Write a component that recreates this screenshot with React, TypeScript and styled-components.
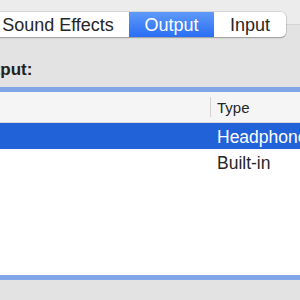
import styled, { createGlobalStyle } from 'styled-components';

const GlobalStyle = createGlobalStyle`
  html, body {
    margin: 0;
    padding: 0;
    background: #ececec;
  }

  body {
    font-family: 'Liberation Sans', Arial, sans-serif;
    color: #222;
  }
`;

const Window = styled.div`
  width: 300px;
  height: 300px;
  overflow: hidden;
  display: flex;
  flex-direction: column;
  background: #ececec;
`;

const Segmented = styled.div`
  position: relative;
  z-index: 1;
  display: flex;
  align-self: flex-start;
  height: 25px;
  margin: 12px 0 -13px -13px;
  background: #fff;
  border-radius: 5px;
  box-shadow: 0 0 0 0.5px rgba(0, 0, 0, 0.18), 0 1px 1.5px rgba(0, 0, 0, 0.25);
  overflow: hidden;
`;

const Segment = styled.div<{ $active?: boolean; $width: number }>`
  width: ${(p) => p.$width}px;
  display: flex;
  align-items: center;
  justify-content: center;
  padding-top: 1px;
  font-size: 18px;
  color: ${(p) => (p.$active ? '#fff' : '#262626')};
  background: ${(p) =>
    p.$active ? 'linear-gradient(#5e9af8, #2a6ef4)' : 'transparent'};
`;

const TabBox = styled.div`
  flex: 1;
  display: flex;
  flex-direction: column;
  background: #e3e3e3;
  border-top: 1px solid #d3d3d3;
  padding-top: 35px;
`;

const Label = styled.div`
  margin-left: -29px;
  font-size: 17px;
  font-weight: bold;
  line-height: 20px;
  color: #222;
`;

const Table = styled.div`
  margin: 7px -20px 0;
  height: 183px;
  border: 5px solid #80a6e7;
  background: #fff;
  display: flex;
  flex-direction: column;
`;

const HeaderRow = styled.div`
  display: grid;
  grid-template-columns: 225px 1fr;
  height: 30px;
  background: #f5f5f5;
  border-bottom: 1px solid #dadada;
`;

const HeaderCell = styled.div<{ $divider?: boolean }>`
  position: relative;
  display: flex;
  align-items: center;
  padding-left: 7px;
  font-size: 15px;
  color: #262626;

  &::before {
    content: '';
    display: ${(p) => (p.$divider ? 'block' : 'none')};
    position: absolute;
    left: 0;
    top: 5px;
    bottom: 5px;
    width: 1px;
    background: #d2d2d2;
  }
`;

const Row = styled.div<{ $selected?: boolean }>`
  display: grid;
  grid-template-columns: 225px 1fr;
  height: 26px;
  background: ${(p) => (p.$selected ? '#2262d9' : '#fff')};
  color: ${(p) => (p.$selected ? '#fff' : '#262626')};
`;

const Cell = styled.div`
  display: flex;
  align-items: center;
  padding-left: 7px;
  padding-top: 2px;
  font-size: 17.5px;
  white-space: nowrap;
  overflow: hidden;
`;

const devices = [
  { type: 'Headphones', selected: true },
  { type: 'Built-in', selected: false },
];

export default function App() {
  return (
    <>
      <GlobalStyle />
      <Window>
        <Segmented>
          <Segment $width={142}>Sound Effects</Segment>
          <Segment $width={85} $active>
            Output
          </Segment>
          <Segment $width={72}>Input</Segment>
        </Segmented>
        <TabBox>
          <Label>Output:</Label>
          <Table>
            <HeaderRow>
              <HeaderCell />
              <HeaderCell $divider>Type</HeaderCell>
            </HeaderRow>
            {devices.map((d) => (
              <Row key={d.type} $selected={d.selected}>
                <Cell />
                <Cell>{d.type}</Cell>
              </Row>
            ))}
          </Table>
        </TabBox>
      </Window>
    </>
  );
}
